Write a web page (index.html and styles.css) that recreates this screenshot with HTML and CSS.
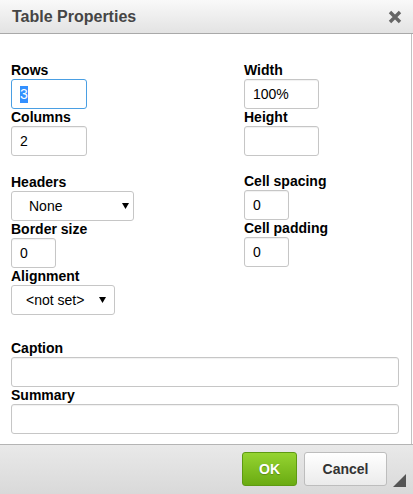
FILE: index.html
```html
<!DOCTYPE html>
<html>
<head>
<meta charset="utf-8">
<title>Table Properties</title>
<link rel="stylesheet" href="styles.css">
</head>
<body>
<div class="dialog">
  <div class="titlebar">
    <span class="title">Table Properties</span>
    <svg class="close" width="14" height="14" viewBox="0 0 14 14"><path d="M2 2 L12 12 M12 2 L2 12" stroke="#666" stroke-width="3.4" stroke-linecap="butt"/></svg>
  </div>
  <div class="content">
    <div class="grid">
      <div class="col">
        <label class="lbl">Rows</label>
        <div class="field w76 focused"><span class="sel">3</span></div>
        <label class="lbl">Columns</label>
        <div class="field w76">2</div>
      </div>
      <div class="col">
        <label class="lbl">Width</label>
        <div class="field w75">100%</div>
        <label class="lbl">Height</label>
        <div class="field w75"></div>
      </div>
      <div class="col">
        <label class="lbl">Headers</label>
        <div class="select headers"><span>None</span><svg class="arrow" width="7" height="6" viewBox="0 0 7 6"><path d="M0 0 H7 L3.5 6 Z" fill="#000"/></svg></div>
        <label class="lbl">Border size</label>
        <div class="field w45">0</div>
        <label class="lbl">Alignment</label>
        <div class="select align"><span>&lt;not set&gt;</span><svg class="arrow" width="7" height="6" viewBox="0 0 7 6"><path d="M0 0 H7 L3.5 6 Z" fill="#000"/></svg></div>
      </div>
      <div class="col up">
        <label class="lbl">Cell spacing</label>
        <div class="field w45">0</div>
        <label class="lbl">Cell padding</label>
        <div class="field w45">0</div>
      </div>
    </div>
    <div class="wide">
      <label class="lbl">Caption</label>
      <div class="field full"></div>
      <label class="lbl">Summary</label>
      <div class="field full"></div>
    </div>
  </div>
  <div class="footer">
    <button class="btn ok">OK</button>
    <button class="btn cancel">Cancel</button>
    <svg class="resize" width="13" height="13" viewBox="0 0 13 13"><path d="M13 0 V13 H0 Z" fill="#555"/></svg>
  </div>
</div>
</body>
</html>
```
FILE: styles.css
```css
html, body {
  margin: 0;
  padding: 0;
  background: #fff;
}
body {
  font-family: "Liberation Sans", Arial, sans-serif;
  width: 413px;
  height: 494px;
  overflow: hidden;
}
.dialog {
  display: flex;
  flex-direction: column;
  height: 494px;
}
.titlebar {
  height: 33px;
  border-bottom: 1px solid #a9a9a9;
  background: linear-gradient(#f9f9f9, #e3e3e3);
  display: flex;
  align-items: center;
  padding: 0 11px 0 12px;
}
.title {
  font-size: 16px;
  font-weight: bold;
  color: #454545;
  line-height: 33px;
  flex: 1;
}
.close {
  display: block;
  margin-top: 1px;
}
.content {
  flex: 1;
  padding: 28px 0 0 11px;
  margin-right: 1px;
  border-right: 1px solid #c2c2c2;
}
.grid {
  display: grid;
  grid-template-columns: 233px auto;
  row-gap: 18px;
}
.col {
  display: flex;
  flex-direction: column;
  align-items: flex-start;
}
.col.up {
  margin-top: -1px;
}
.lbl {
  display: block;
  font-size: 14px;
  font-weight: bold;
  line-height: 17px;
  height: 17px;
  color: #000;
}
.field {
  box-sizing: border-box;
  height: 30px;
  border: 1px solid #c6c6c6;
  border-radius: 3px;
  box-shadow: inset 0 1px 1px rgba(0,0,0,0.06);
  background: #fff;
  font-size: 14px;
  line-height: 28px;
  padding-left: 8px;
  color: #000;
}
.field.focused {
  border-color: #4a9fe3;
  box-shadow: none;
}
.sel {
  background: #3390ff;
  color: #fff;
  display: inline-block;
  line-height: 17px;
}
.w76 { width: 76px; }
.w75 { width: 75px; }
.w45 { width: 45px; }
.full { width: 388px; }
.select {
  box-sizing: border-box;
  height: 30px;
  border: 1px solid #c6c6c6;
  border-radius: 3px;
  background: #fff;
  display: flex;
  align-items: center;
  font-size: 14px;
  color: #000;
}
.select .arrow {
  margin-left: auto;
  display: block;
}
.select.headers {
  width: 123px;
  padding: 0 4px 0 17px;
}
.select.align {
  width: 104px;
  padding: 0 8px 0 14px;
}
.wide {
  margin-top: 25px;
}
.footer {
  height: 49px;
  border-top: 1px solid #b4b4b4;
  background: linear-gradient(#e9e9e9, #d9d9d9);
  display: flex;
  align-items: flex-start;
  padding: 7px 0 0 242px;
  box-sizing: border-box;
  height: 50px;
}
.btn {
  height: 34px;
  box-sizing: border-box;
  border-radius: 3px;
  font-family: "Liberation Sans", Arial, sans-serif;
  font-size: 14px;
  font-weight: bold;
  padding: 0;
  margin: 0;
}
.ok {
  width: 55px;
  border: 1px solid #5e9a12;
  background: linear-gradient(#95d431, #6aab12);
  color: #fff;
  text-shadow: 0 1px 1px rgba(0,0,0,0.25);
}
.cancel {
  width: 83px;
  margin-left: 7px;
  border: 1px solid #bdbdbd;
  background: linear-gradient(#ffffff, #ebebeb);
  color: #333;
}
.resize {
  display: block;
  margin: 22px 0 0 6px;
}
```
